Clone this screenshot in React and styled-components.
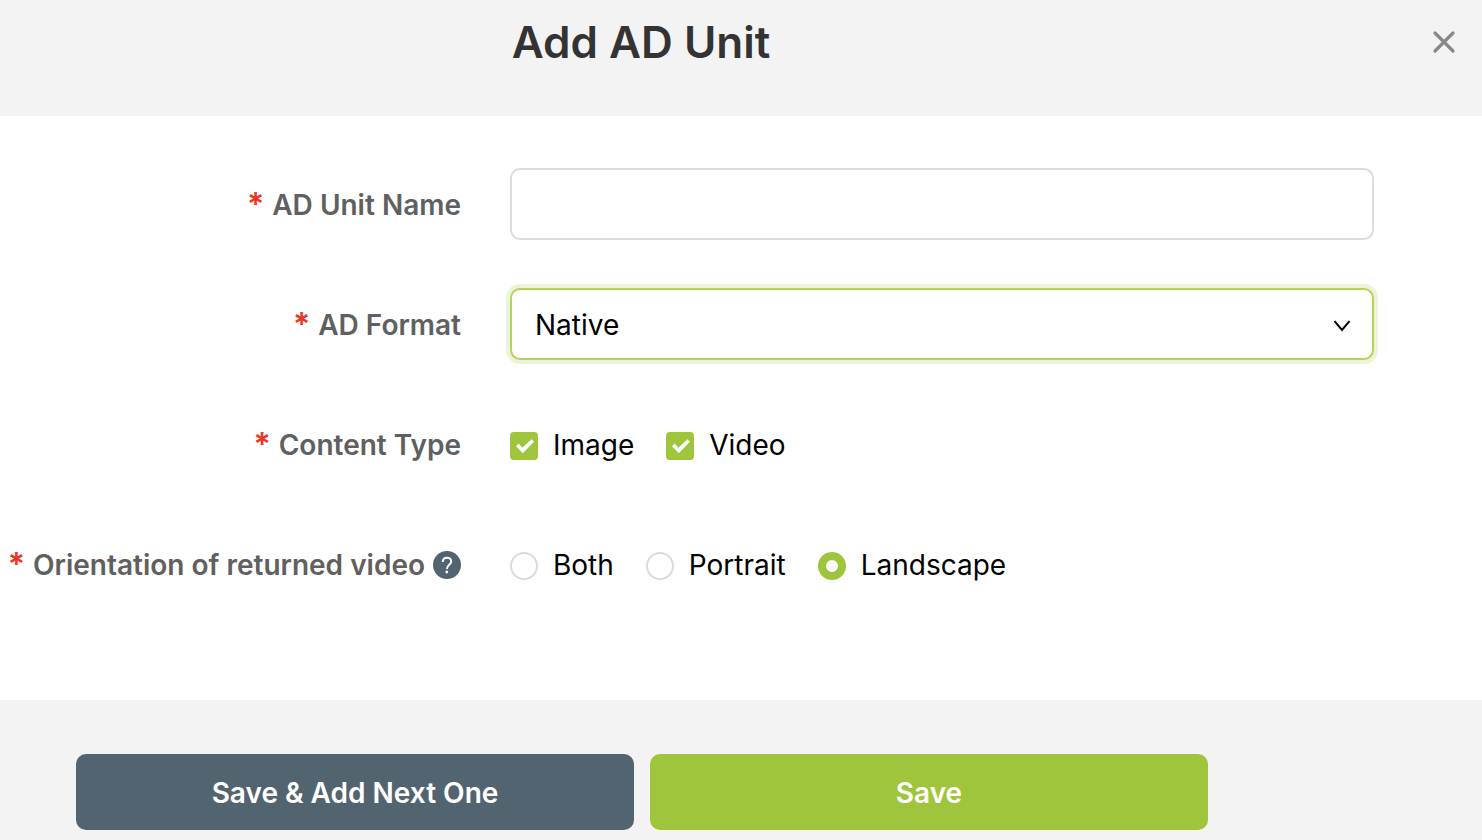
import React, { useState } from "react";
import styled, { createGlobalStyle } from "styled-components";

const GlobalStyle = createGlobalStyle`
  *, *::before, *::after { box-sizing: border-box; }
  body {
    margin: 0;
    background: #f3f3f3;
    color: #000;
    font-family: Inter, "Liberation Sans", sans-serif;
    font-size: 28px;
    line-height: 40px;
  }
  button, input, select { font: inherit; }
`;

const Dialog = styled.form`
  display: flex;
  flex-direction: column;
`;

const Header = styled.header`
  display: flex;
  align-items: flex-start;
  padding: 10px 16px 42px 0;
  background: #f3f3f3;
`;

const Title = styled.h1`
  flex: 1;
  margin: 0;
  padding-left: 140px;
  text-align: center;
  font-size: 44px;
  line-height: 64px;
  font-weight: 600;
  color: #333;
`;

const HeaderSide = styled.div`
  display: flex;
  justify-content: flex-end;
  width: 324px;
  padding-top: 10px;
`;

const CloseButton = styled.button`
  display: flex;
  align-items: center;
  justify-content: center;
  width: 44px;
  height: 44px;
  padding: 0;
  border: 0;
  background: none;
  color: #888;
  cursor: pointer;
`;

const Body = styled.main`
  display: flex;
  flex-direction: column;
  gap: 48px;
  padding: 52px 108px 100px 0;
  background: #fff;
`;

const Row = styled.div`
  display: grid;
  grid-template-columns: 461px 1fr;
  column-gap: 49px;
  align-items: center;
  min-height: 72px;
`;

const Label = styled.label`
  display: flex;
  align-items: center;
  justify-content: flex-end;
  gap: 8px;
  padding-top: 1px;
  white-space: nowrap;
  font-weight: 600;
  color: #606060;
`;

const Required = styled.span`
  font-size: 32px;
  color: #ee3524;
`;

const TextInput = styled.input`
  width: 100%;
  height: 72px;
  padding: 0 24px;
  border: 2px solid #dcdcdc;
  border-radius: 10px;
  outline: none;
  background: #fff;
`;

const SelectBox = styled.div`
  display: grid;
  align-items: center;
  > * { grid-area: 1 / 1; }
  > svg { justify-self: end; margin-right: 22px; pointer-events: none; }
`;

const Select = styled.select`
  appearance: none;
  width: 100%;
  height: 72px;
  padding: 2px 56px 0 23px;
  border: 2px solid #b3d35a;
  border-radius: 10px;
  outline: none;
  background: #fff;
  color: #000;
  box-shadow: 0 0 0 4px #ecf3d9;
`;

const Options = styled.div`
  display: flex;
  flex-wrap: wrap;
  gap: 32px;
`;

const Option = styled.label`
  display: flex;
  align-items: center;
  gap: 15px;
  padding-top: 2px;
  cursor: pointer;
`;

const Mark = styled.span`
  display: grid;
  margin-top: 2px;
  > * { grid-area: 1 / 1; }
  > svg { pointer-events: none; }
`;

const CheckInput = styled.input`
  appearance: none;
  width: 28px;
  height: 28px;
  margin: 0;
  border: 2px solid #dcdcdc;
  border-radius: 4px;
  &:checked { border-color: #9fc53d; background: #9fc53d; }
`;

const RadioInput = styled.input`
  appearance: none;
  width: 28px;
  height: 28px;
  margin: 0;
  border: 2px solid #dcdcdc;
  border-radius: 50%;
  background: #fff;
  &:checked { border: 8px solid #9fc53d; }
`;

const Footer = styled.footer`
  display: flex;
  gap: 16px;
  padding: 54px 274px 10px 76px;
  background: #f3f3f3;
`;

const ActionButton = styled.button`
  flex: 1 1 0;
  height: 76px;
  padding: 2px 16px 0;
  border: 0;
  border-radius: 10px;
  background: ${(p) => (p.$primary ? "#9fc53d" : "#536471")};
  color: #fff;
  font-weight: 600;
  cursor: pointer;
`;

function CloseIcon() {
  return (
    <svg width="24" height="24" viewBox="0 0 24 24" fill="none" stroke="currentColor" strokeWidth="3.2" strokeLinecap="round" aria-hidden="true">
      <path d="M3 3 21 21M21 3 3 21" />
    </svg>
  );
}

function ChevronIcon() {
  return (
    <svg width="20" height="16" viewBox="0 0 20 16" fill="none" stroke="#000" strokeWidth="2" aria-hidden="true">
      <path d="m2.5 5.2 7.5 8.8 7.5-8.8" />
    </svg>
  );
}

function HelpIcon() {
  return (
    <svg width="28" height="28" viewBox="0 0 28 28" fill="none" role="img" aria-label="Help">
      <circle cx="14" cy="14" r="14" fill="#536471" />
      <path d="M9.8 11c0-2.6 1.7-4.2 4.2-4.2s4.2 1.5 4.2 3.7c0 3.2-4.3 3.3-4.3 7.4" stroke="#fff" strokeWidth="2" />
      <circle cx="13.8" cy="21" r="1.4" fill="#fff" />
    </svg>
  );
}

function Check({ label, checked, onChange }) {
  return (
    <Option>
      <Mark>
        <CheckInput type="checkbox" checked={checked} onChange={onChange} />
        {checked && (
          <svg width="28" height="28" viewBox="0 0 28 28" fill="#fff" aria-hidden="true">
            <path d="M6 14.2 8.8 11.6 12.2 15.8 21.6 7.3 24 9.8 12.8 21.2Z" />
          </svg>
        )}
      </Mark>
      {label}
    </Option>
  );
}

function FieldLabel({ children, help, ...rest }) {
  return (
    <Label {...rest}>
      <Required>*</Required>
      {children}
      {help && <HelpIcon />}
    </Label>
  );
}

export default function App() {
  const [name, setName] = useState("");
  const [types, setTypes] = useState({ Image: true, Video: true });
  const [orientation, setOrientation] = useState("Landscape");

  return (
    <>
      <GlobalStyle />
      <Dialog onSubmit={(e) => e.preventDefault()}>
        <Header>
          <Title>Add AD Unit</Title>
          <HeaderSide>
            <CloseButton type="button" aria-label="Close">
              <CloseIcon />
            </CloseButton>
          </HeaderSide>
        </Header>
        <Body>
          <Row>
            <FieldLabel htmlFor="unit-name">AD Unit Name</FieldLabel>
            <TextInput id="unit-name" value={name} onChange={(e) => setName(e.target.value)} />
          </Row>
          <Row>
            <FieldLabel htmlFor="ad-format">AD Format</FieldLabel>
            <SelectBox>
              <Select id="ad-format" defaultValue="Native">
                <option>Native</option>
              </Select>
              <ChevronIcon />
            </SelectBox>
          </Row>
          <Row>
            <FieldLabel as="span" id="content-type">Content Type</FieldLabel>
            <Options role="group" aria-labelledby="content-type">
              {Object.keys(types).map((t) => (
                <Check key={t} label={t} checked={types[t]} onChange={() => setTypes({ ...types, [t]: !types[t] })} />
              ))}
            </Options>
          </Row>
          <Row>
            <FieldLabel as="span" id="orientation" help>Orientation of returned video</FieldLabel>
            <Options role="radiogroup" aria-labelledby="orientation">
              {["Both", "Portrait", "Landscape"].map((o) => (
                <Option key={o}>
                  <Mark>
                    <RadioInput type="radio" name="orientation" checked={orientation === o} onChange={() => setOrientation(o)} />
                  </Mark>
                  {o}
                </Option>
              ))}
            </Options>
          </Row>
        </Body>
        <Footer>
          <ActionButton type="button">Save &amp; Add Next One</ActionButton>
          <ActionButton type="submit" $primary>Save</ActionButton>
        </Footer>
      </Dialog>
    </>
  );
}
